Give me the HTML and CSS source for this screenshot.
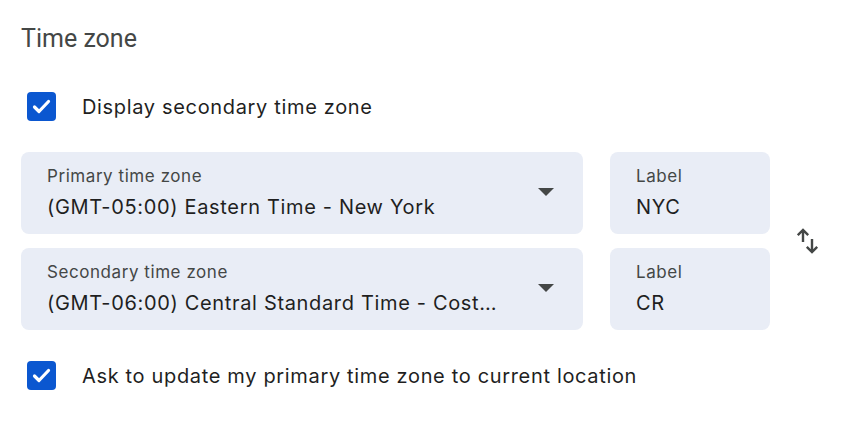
FILE: index.html
```html
<!DOCTYPE html>
<html lang="en">
<head>
<meta charset="utf-8">
<title>Time zone</title>
<link rel="stylesheet" href="styles.css">
</head>
<body>
<section class="panel">
  <h2 class="title">Time zone</h2>

  <label class="check-row first">
    <span class="checkbox">
      <svg viewBox="0 0 29 29" width="29" height="29"><path d="M7.5 15l4.5 4.5L21.5 9.5" fill="none" stroke="#fff" stroke-width="3.2" stroke-linecap="round" stroke-linejoin="round"/></svg>
    </span>
    <span class="check-text">Display secondary time zone</span>
  </label>

  <div class="zones">
    <div class="field select">
      <div class="field-body">
        <div class="field-label">Primary time zone</div>
        <div class="field-value">(GMT-05:00) Eastern Time - New York</div>
      </div>
      <span class="caret"></span>
    </div>
    <div class="field short">
      <div class="field-body">
        <div class="field-label">Label</div>
        <div class="field-value">NYC</div>
      </div>
    </div>
    <button class="swap" type="button" aria-label="Swap time zones">
      <svg viewBox="0 0 22 26" width="22" height="26"><path d="M6 14V2.2M0.8 7.2L6 2l5.2 5.2M15 11v12.8M9.8 18.8L15 24l5.2-5.2" fill="none" stroke="#444746" stroke-width="2.4" stroke-linecap="butt" stroke-linejoin="miter"/></svg>
    </button>
    <div class="field select">
      <div class="field-body">
        <div class="field-label">Secondary time zone</div>
        <div class="field-value">(GMT-06:00) Central Standard Time - Costa Rica</div>
      </div>
      <span class="caret"></span>
    </div>
    <div class="field short">
      <div class="field-body">
        <div class="field-label">Label</div>
        <div class="field-value">CR</div>
      </div>
    </div>
  </div>

  <label class="check-row last">
    <span class="checkbox">
      <svg viewBox="0 0 29 29" width="29" height="29"><path d="M7.5 15l4.5 4.5L21.5 9.5" fill="none" stroke="#fff" stroke-width="3.2" stroke-linecap="round" stroke-linejoin="round"/></svg>
    </span>
    <span class="check-text">Ask to update my primary time zone to current location</span>
  </label>
</section>
</body>
</html>
```

FILE: styles.css
```css
html, body {
  margin: 0;
  padding: 0;
  background: #ffffff;
}

body {
  font-family: Inter, Roboto, "Noto Sans", Arial, sans-serif;
  color: #1f1f1f;
}

.panel {
  padding: 24px 0 0 21px;
}

.title {
  margin: 0;
  font-family: Roboto, "Noto Sans", Arial, sans-serif;
  font-size: 25px;
  line-height: 30px;
  font-weight: 400;
  color: #444746;
}

.check-row {
  display: flex;
  align-items: center;
  gap: 26px;
  padding-left: 6px;
}

.check-row.first {
  margin-top: 38px;
}

.check-row.last {
  margin-top: 31px;
}

.checkbox {
  width: 29px;
  height: 29px;
  border-radius: 4px;
  background: #0b57d0;
  display: flex;
  align-items: center;
  justify-content: center;
  flex: none;
}

.check-text {
  font-size: 20px;
  line-height: 28px;
  letter-spacing: 0.033em;
  color: #1f1f1f;
}

.zones {
  margin-top: 31px;
  display: grid;
  grid-template-columns: 562px 160px 48px;
  grid-auto-rows: 82px;
  column-gap: 27px;
  row-gap: 14px;
}

.field {
  background: #e9edf6;
  border-radius: 8px;
  display: flex;
  align-items: flex-start;
  padding: 0 26px;
  min-width: 0;
}

.field-body {
  flex: 1;
  min-width: 0;
  padding-top: 13px;
}

.field-label {
  font-size: 17px;
  line-height: 22px;
  letter-spacing: 0.033em;
  color: #444746;
}

.field-value {
  margin-top: 7px;
  font-size: 20px;
  line-height: 26px;
  letter-spacing: 0.033em;
  color: #1f1f1f;
  white-space: nowrap;
  overflow: hidden;
  text-overflow: ellipsis;
}

.select .field-body {
  padding-right: 38px;
}

.caret {
  flex: none;
  width: 0;
  height: 0;
  border-left: 8px solid transparent;
  border-right: 8px solid transparent;
  border-top: 8.5px solid #444746;
  margin-right: 3px;
  margin-top: 36px;
}

.swap {
  grid-column: 3;
  grid-row: 1 / span 2;
  align-self: center;
  justify-self: start;
  padding: 0;
  border: 0;
  background: none;
  display: flex;
}
```
